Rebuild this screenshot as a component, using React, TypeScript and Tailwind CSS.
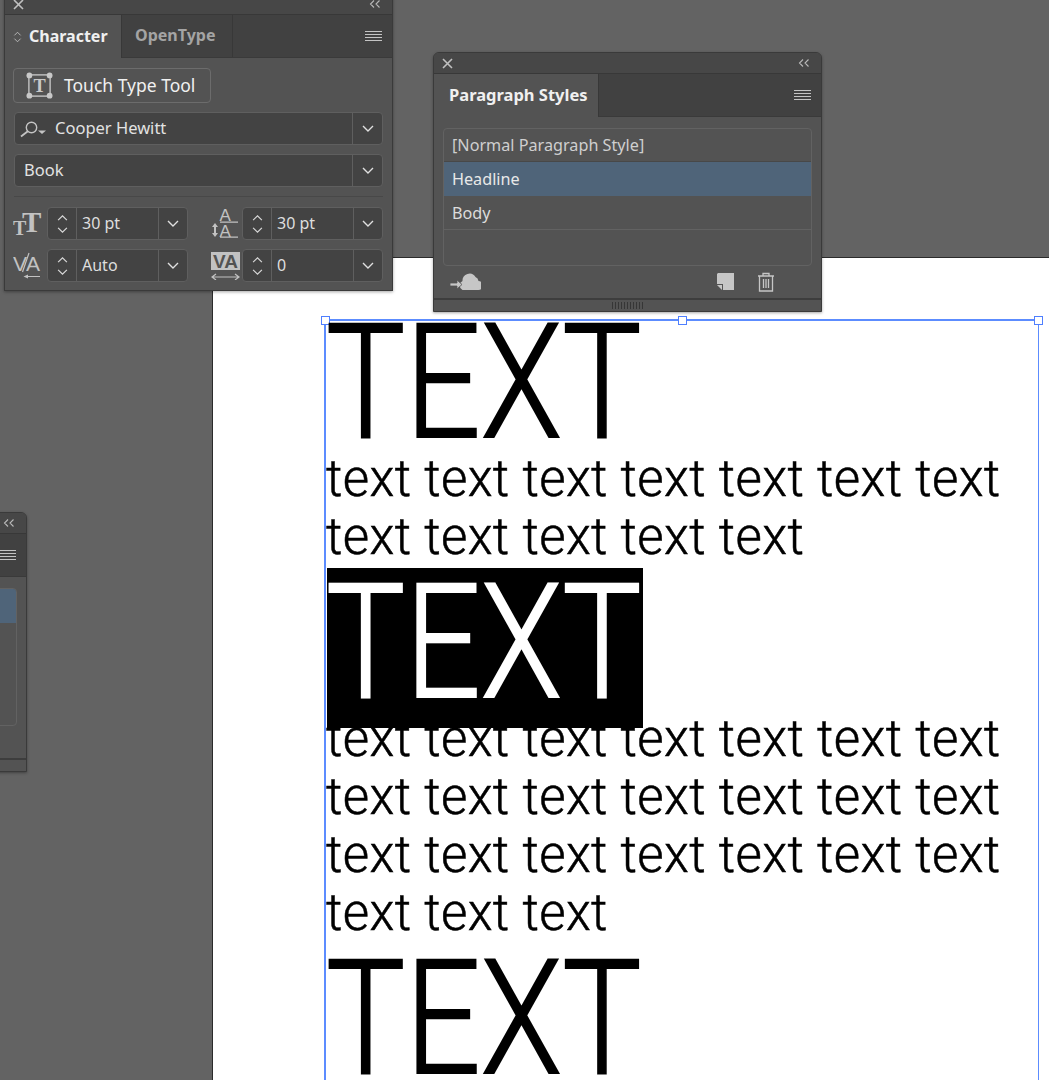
import React from 'react';

const ui = { fontFamily: '"Noto Sans", sans-serif' };

const Chevron = ({ up = false, className = 'w-[14px] h-[8px]' }: { up?: boolean; className?: string }) => (
  <svg viewBox="0 0 14 8" className={className} fill="none" stroke="currentColor" strokeWidth="1.4">
    <path d={up ? 'M2 7 L7 2 L12 7' : 'M2 1 L7 6 L12 1'} />
  </svg>
);

const Burger = () => (
  <svg viewBox="0 0 17 13" className="w-[17px] h-[13px] mt-[1px] text-[#c4c4c4]" stroke="currentColor" strokeWidth="1.2">
    <path d="M0 1.5H17M0 4.5H17M0 7.5H17M0 10.5H17" />
  </svg>
);

const TitleBar = () => (
  <div className="h-[21px] bg-[#474747] border-b border-[#383838] flex items-center justify-between pl-[8px] pr-[11px] shrink-0">
    <svg viewBox="0 0 11 11" className="w-[11px] h-[11px] text-[#c0c0c0]" stroke="currentColor" strokeWidth="1.6">
      <path d="M1 1L10 10M10 1L1 10" />
    </svg>
    <svg viewBox="0 0 12 8" className="w-[12px] h-[8px] text-[#b8b8b8]" fill="none" stroke="currentColor" strokeWidth="1.1">
      <path d="M5 0.5L1.5 4L5 7.5M10.5 0.5L7 4L10.5 7.5" />
    </svg>
  </div>
);

const Field = ({ children, className = '' }: { children: React.ReactNode; className?: string }) => (
  <div className={`h-[33px] rounded-[4px] border border-[#5f5f5f] bg-[#434343] flex items-stretch text-[#e2e2e2] text-[16.5px] ${className}`}>
    <div className="flex-1 flex items-center min-w-0">{children}</div>
    <div className="w-[30px] border-l border-[#5f5f5f] flex items-center justify-center text-[#e0e0e0]">
      <Chevron />
    </div>
  </div>
);

const Stepper = ({ value }: { value: string }) => (
  <div className="h-[33px] w-[141px] rounded-[4px] border border-[#5f5f5f] bg-[#434343] flex items-stretch text-[#dedede] text-[16px]">
    <div className="w-[29px] border-r border-[#5f5f5f] flex flex-col items-center justify-center gap-[6px] text-[#d8d8d8]">
      <Chevron up className="w-[13px] h-[7px]" />
      <Chevron className="w-[13px] h-[7px]" />
    </div>
    <div className="flex-1 flex items-center pl-[5px] pb-[2px]">{value}</div>
    <div className="w-[29px] border-l border-[#5f5f5f] flex items-center justify-center text-[#e0e0e0]">
      <Chevron />
    </div>
  </div>
);

const SizeIcon = () => (
  <svg viewBox="0 0 30 24" className="w-[30px] h-[24px] text-[#c2c2c2]" fill="currentColor">
    <text x="0" y="23" fontSize="20" fontWeight="700" fontFamily="Liberation Serif">T</text>
    <text x="9" y="20" fontSize="29" fontWeight="700" fontFamily="Liberation Serif">T</text>
  </svg>
);

const LeadingIcon = () => (
  <svg viewBox="0 0 28 30" className="w-[28px] h-[30px] text-[#c2c2c2]" fill="currentColor">
    <text x="8.5" y="12" fontSize="17" fontFamily="Liberation Sans">A</text>
    <text x="8.5" y="28" fontSize="17" fontFamily="Liberation Sans">A</text>
    <path d="M9 12.5H27V13.7H9ZM9 27.5H27V28.7H9Z" />
    <path d="M4 14L7 18H5V24H7L4 28L1 24H3V18H1Z" />
  </svg>
);

const KernIcon = () => (
  <svg viewBox="0 0 28 28" className="w-[28px] h-[28px] text-[#c2c2c2]" fill="currentColor">
    <text x="0" y="19" fontSize="21" fontFamily="Liberation Sans">V</text>
    <text x="13" y="19" fontSize="21" fontFamily="Liberation Sans">A</text>
    <path d="M9.5 20L16 1" stroke="currentColor" strokeWidth="1.2" fill="none" />
    <path d="M15 22.5V24H27V25H15V26.5L10.5 24.5Z" />
  </svg>
);

const TrackIcon = () => (
  <svg viewBox="0 0 30 28" className="w-[30px] h-[28px] text-[#c2c2c2]">
    <rect x="0" y="0" width="29" height="18" fill="currentColor" />
    <text x="2" y="16" fontSize="19" fontWeight="700" fontFamily="Liberation Sans" fill="#535353">VA</text>
    <path d="M1 25H28M5 22L1 25L5 28M24 22L28 25L24 28" fill="none" stroke="currentColor" strokeWidth="1.2" />
  </svg>
);

const SearchIcon = () => (
  <svg viewBox="0 0 28 16" className="w-[28px] h-[18px] text-[#c4c4c4]" fill="none" stroke="currentColor" strokeWidth="1.4">
    <circle cx="12.5" cy="6.5" r="5.2" />
    <path d="M8.8 10.3L2 15.5" strokeWidth="1.8" />
    <path d="M19 9.5H27L23 13Z" fill="currentColor" stroke="none" />
  </svg>
);

const TouchIcon = () => (
  <svg viewBox="0 0 28 28" className="w-[27px] h-[27px] text-[#c8c8c8]">
    <rect x="3" y="3" width="22" height="22" fill="none" stroke="currentColor" strokeWidth="1.4" />
    <circle cx="3.5" cy="3.5" r="3" fill="currentColor" />
    <circle cx="24.5" cy="3.5" r="3" fill="currentColor" />
    <circle cx="3.5" cy="24.5" r="3" fill="currentColor" />
    <circle cx="24.5" cy="24.5" r="3" fill="currentColor" />
    <text x="14" y="21" textAnchor="middle" fontSize="19" fontWeight="700" fontFamily="Liberation Serif" fill="currentColor">T</text>
  </svg>
);

function CharacterPanel() {
  return (
    <div className="absolute left-[4px] top-[-7px] w-[389px] h-[298px] bg-[#535353] border border-[#3a3a3a] shadow-[0_1px_3px_rgba(0,0,0,0.35)] flex flex-col" style={ui}>
      <TitleBar />
      <div className="h-[43px] bg-[#414141] flex items-stretch border-b border-[#3a3a3a] shrink-0">
        <div className="w-[117px] -mb-px bg-[#535353] border-r border-[#383838] flex items-center pl-[8px] pb-[2px] gap-[7px] text-[#f0f0f0] font-bold text-[16px]">
          <span className="flex flex-col gap-[2px] text-[#c4c4c4] pt-[2px]">
            <Chevron up className="w-[9px] h-[5px]" />
            <Chevron className="w-[9px] h-[5px]" />
          </span>
          Character
        </div>
        <div className="w-[111px] border-r border-[#383838] flex items-center pl-[13px] pb-[2px] text-[#a4a4a4] font-bold text-[16px]">OpenType</div>
        <div className="flex-1 flex items-center justify-end pr-[10px]">
          <Burger />
        </div>
      </div>
      <div className="flex-1 px-[8px] pt-[10px]">
        <div className="w-[198px] h-[35px] rounded-[4px] border border-[#6c6c6c] flex items-center pl-[12px] gap-[11px] text-[#f0f0f0] text-[17.5px]">
          <TouchIcon />
          Touch Type Tool
        </div>
        <Field className="mt-[9px] ml-px w-[369px]">
          <span className="ml-[4px] mr-[8px]"><SearchIcon /></span>
          <span>Cooper Hewitt</span>
        </Field>
        <Field className="mt-[9px] ml-px w-[369px]">
          <span className="ml-[9px]">Book</span>
        </Field>
        <div className="mt-[9px] ml-px w-[369px] h-px bg-[#484848]" />
        <div className="mt-[10px] w-[370px] grid grid-cols-[34px_141px_54px_141px] gap-y-[9px] items-center">
          <SizeIcon />
          <Stepper value="30 pt" />
          <div className="justify-self-end pr-[3px]"><LeadingIcon /></div>
          <Stepper value="30 pt" />
          <KernIcon />
          <Stepper value="Auto" />
          <div className="justify-self-end pr-[1px]"><TrackIcon /></div>
          <Stepper value="0" />
        </div>
      </div>
    </div>
  );
}

function StylesPanel() {
  return (
    <div className="absolute left-[433px] top-[52px] w-[389px] h-[260px] bg-[#535353] border border-[#3a3a3a] rounded-t-[6px] overflow-hidden shadow-[0_1px_3px_rgba(0,0,0,0.35)] flex flex-col" style={ui}>
      <TitleBar />
      <div className="h-[43px] bg-[#414141] flex items-stretch border-b border-[#3a3a3a] shrink-0">
        <div className="w-[165px] -mb-px bg-[#535353] border-r border-[#383838] flex items-center pl-[15px] text-[#f0f0f0] font-bold text-[16.5px]">
          Paragraph Styles
        </div>
        <div className="flex-1 flex items-center justify-end pr-[10px]">
          <Burger />
        </div>
      </div>
      <div className="mx-[9px] mt-[11px] h-[138px] rounded-[4px] border border-[#626262] overflow-hidden text-[16.2px] text-[#dcdcdc]">
        <div className="h-[33px] flex items-center pl-[8px] border-b border-[#484848] text-[#cfcfcf]">[Normal Paragraph Style]</div>
        <div className="h-[34px] flex items-center pl-[8px] bg-[#4f6479] text-[#e8e8e8]">Headline</div>
        <div className="h-[34px] flex items-center pl-[8px] pt-[1px] border-b border-[#626262]">Body</div>
      </div>
      <div className="flex-1 flex items-center text-[#c6c6c6] pl-[16px]">
        <svg viewBox="0 0 31 20" className="w-[31px] h-[20px]" fill="currentColor">
          <path d="M9 17 a5 5 0 0 1 0 -9 a7 7 0 0 1 13 -4 a5 5 0 0 1 3 4 a4.5 4.5 0 0 1 0 9 Z" transform="translate(3.5 1)" />
          <path d="M0 11H7V8L12 12.5L7 17V14H0Z" stroke="#535353" strokeWidth="0.8" />
        </svg>
        <svg viewBox="0 0 17 18" className="w-[17px] h-[18px] ml-[236px]" fill="currentColor">
          <path d="M1 0H17V17H6V11H0V1Z" />
          <path d="M0 12H5V17Z" />
        </svg>
        <svg viewBox="0 0 18 20" className="w-[18px] h-[20px] ml-[23px]" fill="none" stroke="currentColor" strokeWidth="1.3">
          <path d="M1 4H17M6 4V1.5H12V4M2.5 4V19H15.5V4M6.5 7V16M9 7V16M11.5 7V16" />
        </svg>
      </div>
      <div className="h-[2px] bg-[#3d3d3d]" />
      <div className="h-[11px] flex items-center justify-center">
        <div className="w-[31px] h-[7px] bg-[repeating-linear-gradient(90deg,#363636_0,#363636_1px,transparent_1px,transparent_3px)]" />
      </div>
    </div>
  );
}

function CutOffPanel() {
  return (
    <div className="absolute left-[-362px] top-[512px] w-[389px] h-[260px] bg-[#535353] border border-[#3a3a3a] rounded-t-[6px] overflow-hidden shadow-[0_1px_3px_rgba(0,0,0,0.35)] flex flex-col">
      <TitleBar />
      <div className="h-[43px] bg-[#414141] flex items-center justify-end pr-[10px] border-b border-[#3a3a3a] shrink-0">
        <Burger />
      </div>
      <div className="mx-[9px] mt-[11px] h-[138px] rounded-[4px] border border-[#626262] overflow-hidden">
        <div className="h-[34px] bg-[#4f6479]" />
      </div>
      <div className="flex-1" />
      <div className="h-[2px] bg-[#3d3d3d]" />
      <div className="h-[11px]" />
    </div>
  );
}

const Headline = ({ selected = false, className = '' }: { selected?: boolean; className?: string }) => (
  <div className={`relative h-[132px] text-[160px] font-light [-webkit-text-stroke:2px_currentColor] ${className}`}>
    {selected && <div className="absolute left-[1px] top-[-10px] w-[316px] h-[160px] bg-black" />}
    <span className={`relative block h-[129px] leading-[129px] origin-left scale-x-[0.83] ${selected ? 'text-white' : 'text-black'}`}>TEXT</span>
  </div>
);

const BodyLine = ({ n }: { n: number }) => (
  <div className="relative h-[58px] leading-[58px] text-[51px] font-light tracking-[0.35px] [-webkit-text-stroke:0.5px_black] text-black whitespace-nowrap">
    {Array.from({ length: n }, () => 'text').join(' ')}
  </div>
);

const Handle = ({ className }: { className: string }) => (
  <div className={`absolute top-[-5px] w-[9px] h-[9px] bg-white border border-[#4f7fff] ${className}`} />
);

export default function App() {
  return (
    <div className="relative w-[1049px] h-[1080px] overflow-hidden bg-[#636363]">
      {/* Artboard */}
      <div className="absolute left-[212px] top-[257px] right-0 bottom-0 bg-white border-l border-t border-[#2b2b2b]" />

      {/* Text frame */}
      <div className="absolute left-[324px] top-[319px] w-[715px] h-[761px] border-l-2 border-t-2 border-r border-[#5c8cff]">
        <Handle className="left-[-5px]" />
        <Handle className="left-[352px]" />
        <Handle className="left-[708px]" />
        <div className="-mt-[3px]" style={{ fontFamily: 'Roboto, sans-serif' }}>
          <Headline />
          <BodyLine n={7} />
          <BodyLine n={5} />
          <Headline selected className="mt-[12px]" />
          <BodyLine n={7} />
          <BodyLine n={7} />
          <BodyLine n={7} />
          <BodyLine n={3} />
          <Headline className="mt-[12px]" />
        </div>
      </div>

      <CutOffPanel />
      <CharacterPanel />
      <StylesPanel />
    </div>
  );
}
